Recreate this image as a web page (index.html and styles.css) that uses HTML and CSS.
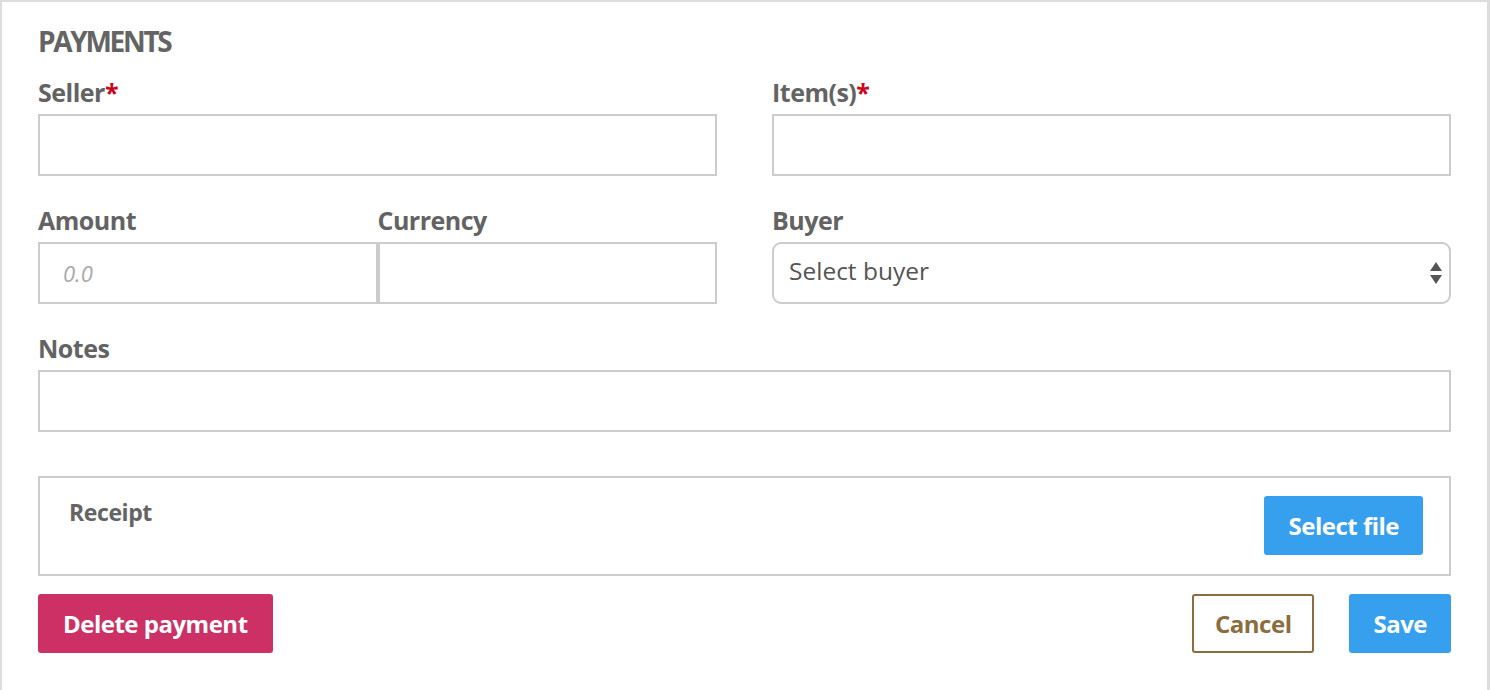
FILE: index.html
```html
<!DOCTYPE html>
<html>
<head>
  <meta charset="utf-8">
  <title>Payments</title>
  <link rel="stylesheet" href="styles.css">
</head>
<body>
  <div class="panel">
    <h2 class="title">PAYMENTS</h2>

    <!-- Seller / Items -->
    <div class="row">
      <div class="field">
        <label class="label">Seller<span class="req">*</span></label>
        <input class="input" type="text">
      </div>
      <div class="field">
        <label class="label">Item(s)<span class="req">*</span></label>
        <input class="input" type="text">
      </div>
    </div>

    <!-- Amount / Currency / Buyer -->
    <div class="row">
      <div class="pair">
        <div class="field">
          <label class="label">Amount</label>
          <input class="input amount" type="text" placeholder="0.0">
        </div>
        <div class="field">
          <label class="label">Currency</label>
          <input class="input" type="text">
        </div>
      </div>
      <div class="field">
        <label class="label">Buyer</label>
        <div class="select-wrap">
          <select class="select">
            <option>Select buyer</option>
          </select>
          <svg class="arrows" width="14" height="24" viewBox="0 0 14 24">
            <path d="M7 1 L13 10 L1 10 Z" fill="#555"/>
            <path d="M1 14 L13 14 L7 23 Z" fill="#555"/>
          </svg>
        </div>
      </div>
    </div>

    <!-- Notes -->
    <div class="field notes">
      <label class="label">Notes</label>
      <input class="input" type="text">
    </div>

    <!-- Receipt -->
    <div class="receipt">
      <span class="receipt-label">Receipt</span>
      <button class="btn btn-blue">Select file</button>
    </div>

    <div class="actions">
      <button class="btn btn-danger">Delete payment</button>
      <div class="actions-right">
        <button class="btn btn-outline">Cancel</button>
        <button class="btn btn-blue">Save</button>
      </div>
    </div>
  </div>
</body>
</html>
```

FILE: styles.css
```css
body {
  margin: 0;
  padding: 0;
  background-color: #fff;
  font-family: "Open Sans", Arial, sans-serif;
  color: #616161;
}
.panel {
  box-sizing: border-box;
  width: 1490px;
  min-height: 720px;
  border: 2px solid #dddddd;
  border-right-width: 3px;
  padding: 24px 36px 0 36px;
}
.title {
  margin: 0 0 21px 0;
  font-size: 28px;
  line-height: 30px;
  font-weight: 700;
  letter-spacing: -2.3px;
  color: #646464;
}
.row {
  display: grid;
  grid-template-columns: 1fr 1fr;
  column-gap: 55px;
  margin-bottom: 29px;
}
.pair {
  display: grid;
  grid-template-columns: 1fr 1fr;
}
.field {
  display: flex;
  flex-direction: column;
}
.label {
  font-size: 25px;
  line-height: 30px;
  font-weight: 700;
  letter-spacing: -0.5px;
  color: #636363;
  margin-bottom: 7px;
}
.req {
  color: #d0021b;
}
.input {
  box-sizing: border-box;
  height: 62px;
  width: 100%;
  margin: 0;
  border: 2px solid #cccccc;
  border-radius: 0;
  padding: 0 23px;
  font-family: "Open Sans", Arial, sans-serif;
  font-size: 22px;
  color: #555;
  outline: none;
}
.input::placeholder {
  color: #aaaaaa;
  font-style: italic;
}
.select-wrap {
  position: relative;
}
.select {
  box-sizing: border-box;
  width: 100%;
  height: 62px;
  appearance: none;
  -webkit-appearance: none;
  background: #fff;
  border: 2px solid #cccccc;
  border-radius: 9px;
  padding: 0 15px 5px 15px;
  font-family: "Open Sans", Arial, sans-serif;
  font-size: 24.5px;
  color: #555;
  outline: none;
}
.arrows {
  position: absolute;
  right: 8px;
  top: 19px;
}
.notes {
  margin-bottom: 44px;
}
.receipt {
  display: flex;
  justify-content: space-between;
  align-items: flex-start;
  border: 2px solid #cccccc;
  padding: 18px 26px 19px 29px;
  margin-bottom: 18px;
}
.receipt-label {
  font-size: 23px;
  line-height: 32px;
  font-weight: 700;
  letter-spacing: -0.4px;
  color: #646464;
}
.btn {
  box-sizing: border-box;
  height: 59px;
  border: none;
  border-radius: 3px;
  padding: 0 24px;
  font-family: "Open Sans", Arial, sans-serif;
  font-size: 24px;
  font-weight: 700;
  letter-spacing: -0.5px;
  color: #fff;
  cursor: pointer;
}
.btn-blue {
  background-color: #36a0ee;
}
.btn-danger {
  background-color: #cd3064;
  padding: 0 25px;
}
.btn-outline {
  background-color: #fff;
  border: 2px solid #8b6d3f;
  color: #8b6d3f;
  padding: 0 21px;
}
.actions {
  display: flex;
  justify-content: space-between;
}
.actions-right {
  display: flex;
  gap: 35px;
}
```
